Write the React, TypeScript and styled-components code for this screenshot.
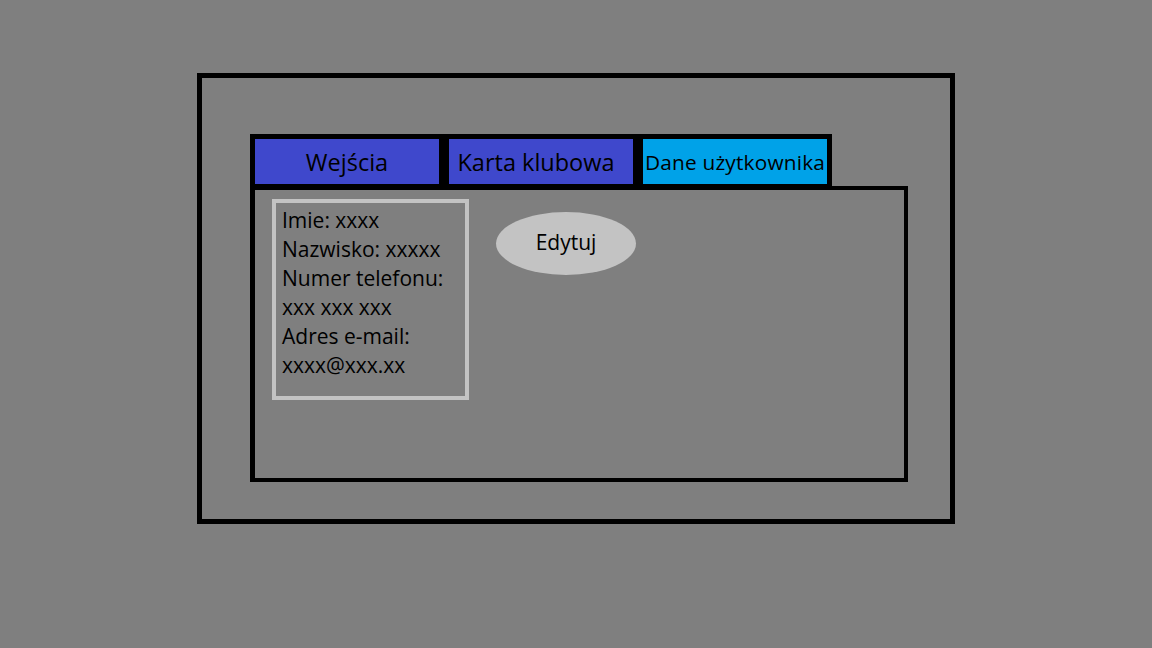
import React from 'react';
import styled, { createGlobalStyle } from 'styled-components';

const GlobalStyle = createGlobalStyle`
  html, body {
    margin: 0;
    padding: 0;
    background: #7f7f7f;
  }
`;

const Page = styled.div`
  width: 1152px;
  height: 648px;
  box-sizing: border-box;
  padding: 73px 0 0 197px;
  background: #7f7f7f;
  font-family: 'Open Sans', 'Liberation Sans', sans-serif;
  color: #000;
`;

const Frame = styled.div`
  width: 758px;
  height: 451px;
  box-sizing: border-box;
  border: 5px solid #000;
  padding: 56px 0 0 48px;
`;

const TabBar = styled.div`
  display: inline-flex;
  gap: 10px;
  background: #000;
  padding: 5px 5px 2px 5px;
`;

const Tab = styled.div<{ $active?: boolean; $small?: boolean; $nudge?: number }>`
  width: 184px;
  height: 45px;
  box-sizing: border-box;
  display: flex;
  align-items: center;
  justify-content: center;
  padding-right: ${(p) => p.$nudge ?? 0}px;
  background: ${(p) => (p.$active ? '#00a2e8' : '#3f48cc')};
  font-size: ${(p) => (p.$small ? '20.8px' : '23.5px')};
  letter-spacing: ${(p) => (p.$small ? '0.2px' : '0')};
  white-space: nowrap;
  overflow: hidden;
`;

const Panel = styled.div`
  width: 658px;
  height: 296px;
  box-sizing: border-box;
  border: 4px solid #000;
  border-left-width: 5px;
  display: flex;
  align-items: flex-start;
  padding: 9px 0 0 17px;
  gap: 27px;
`;

const InfoBox = styled.div`
  width: 197px;
  height: 201px;
  box-sizing: border-box;
  border: 4px solid #c3c3c3;
  padding: 3px 0 0 6px;
`;

const InfoLine = styled.div`
  font-size: 21px;
  line-height: 29px;
  white-space: nowrap;
`;

const EditButton = styled.button`
  margin-top: 13px;
  width: 140px;
  height: 63px;
  border: none;
  border-radius: 50%;
  background: #c3c3c3;
  font-family: inherit;
  font-size: 21px;
  color: #000;
  padding: 0 0 4px 0;
`;

const lines = [
  'Imie: xxxx',
  'Nazwisko: xxxxx',
  'Numer telefonu:',
  'xxx xxx xxx',
  'Adres e-mail:',
  'xxxx@xxx.xx',
];

export default function App() {
  return (
    <Page>
      <GlobalStyle />
      <Frame>
        <TabBar>
          <Tab>Wejścia</Tab>
          <Tab $nudge={10}>Karta klubowa</Tab>
          <Tab $active $small>
            Dane użytkownika
          </Tab>
        </TabBar>
        <Panel>
          <InfoBox>
            {lines.map((l) => (
              <InfoLine key={l}>{l}</InfoLine>
            ))}
          </InfoBox>
          <EditButton>Edytuj</EditButton>
        </Panel>
      </Frame>
    </Page>
  );
}
